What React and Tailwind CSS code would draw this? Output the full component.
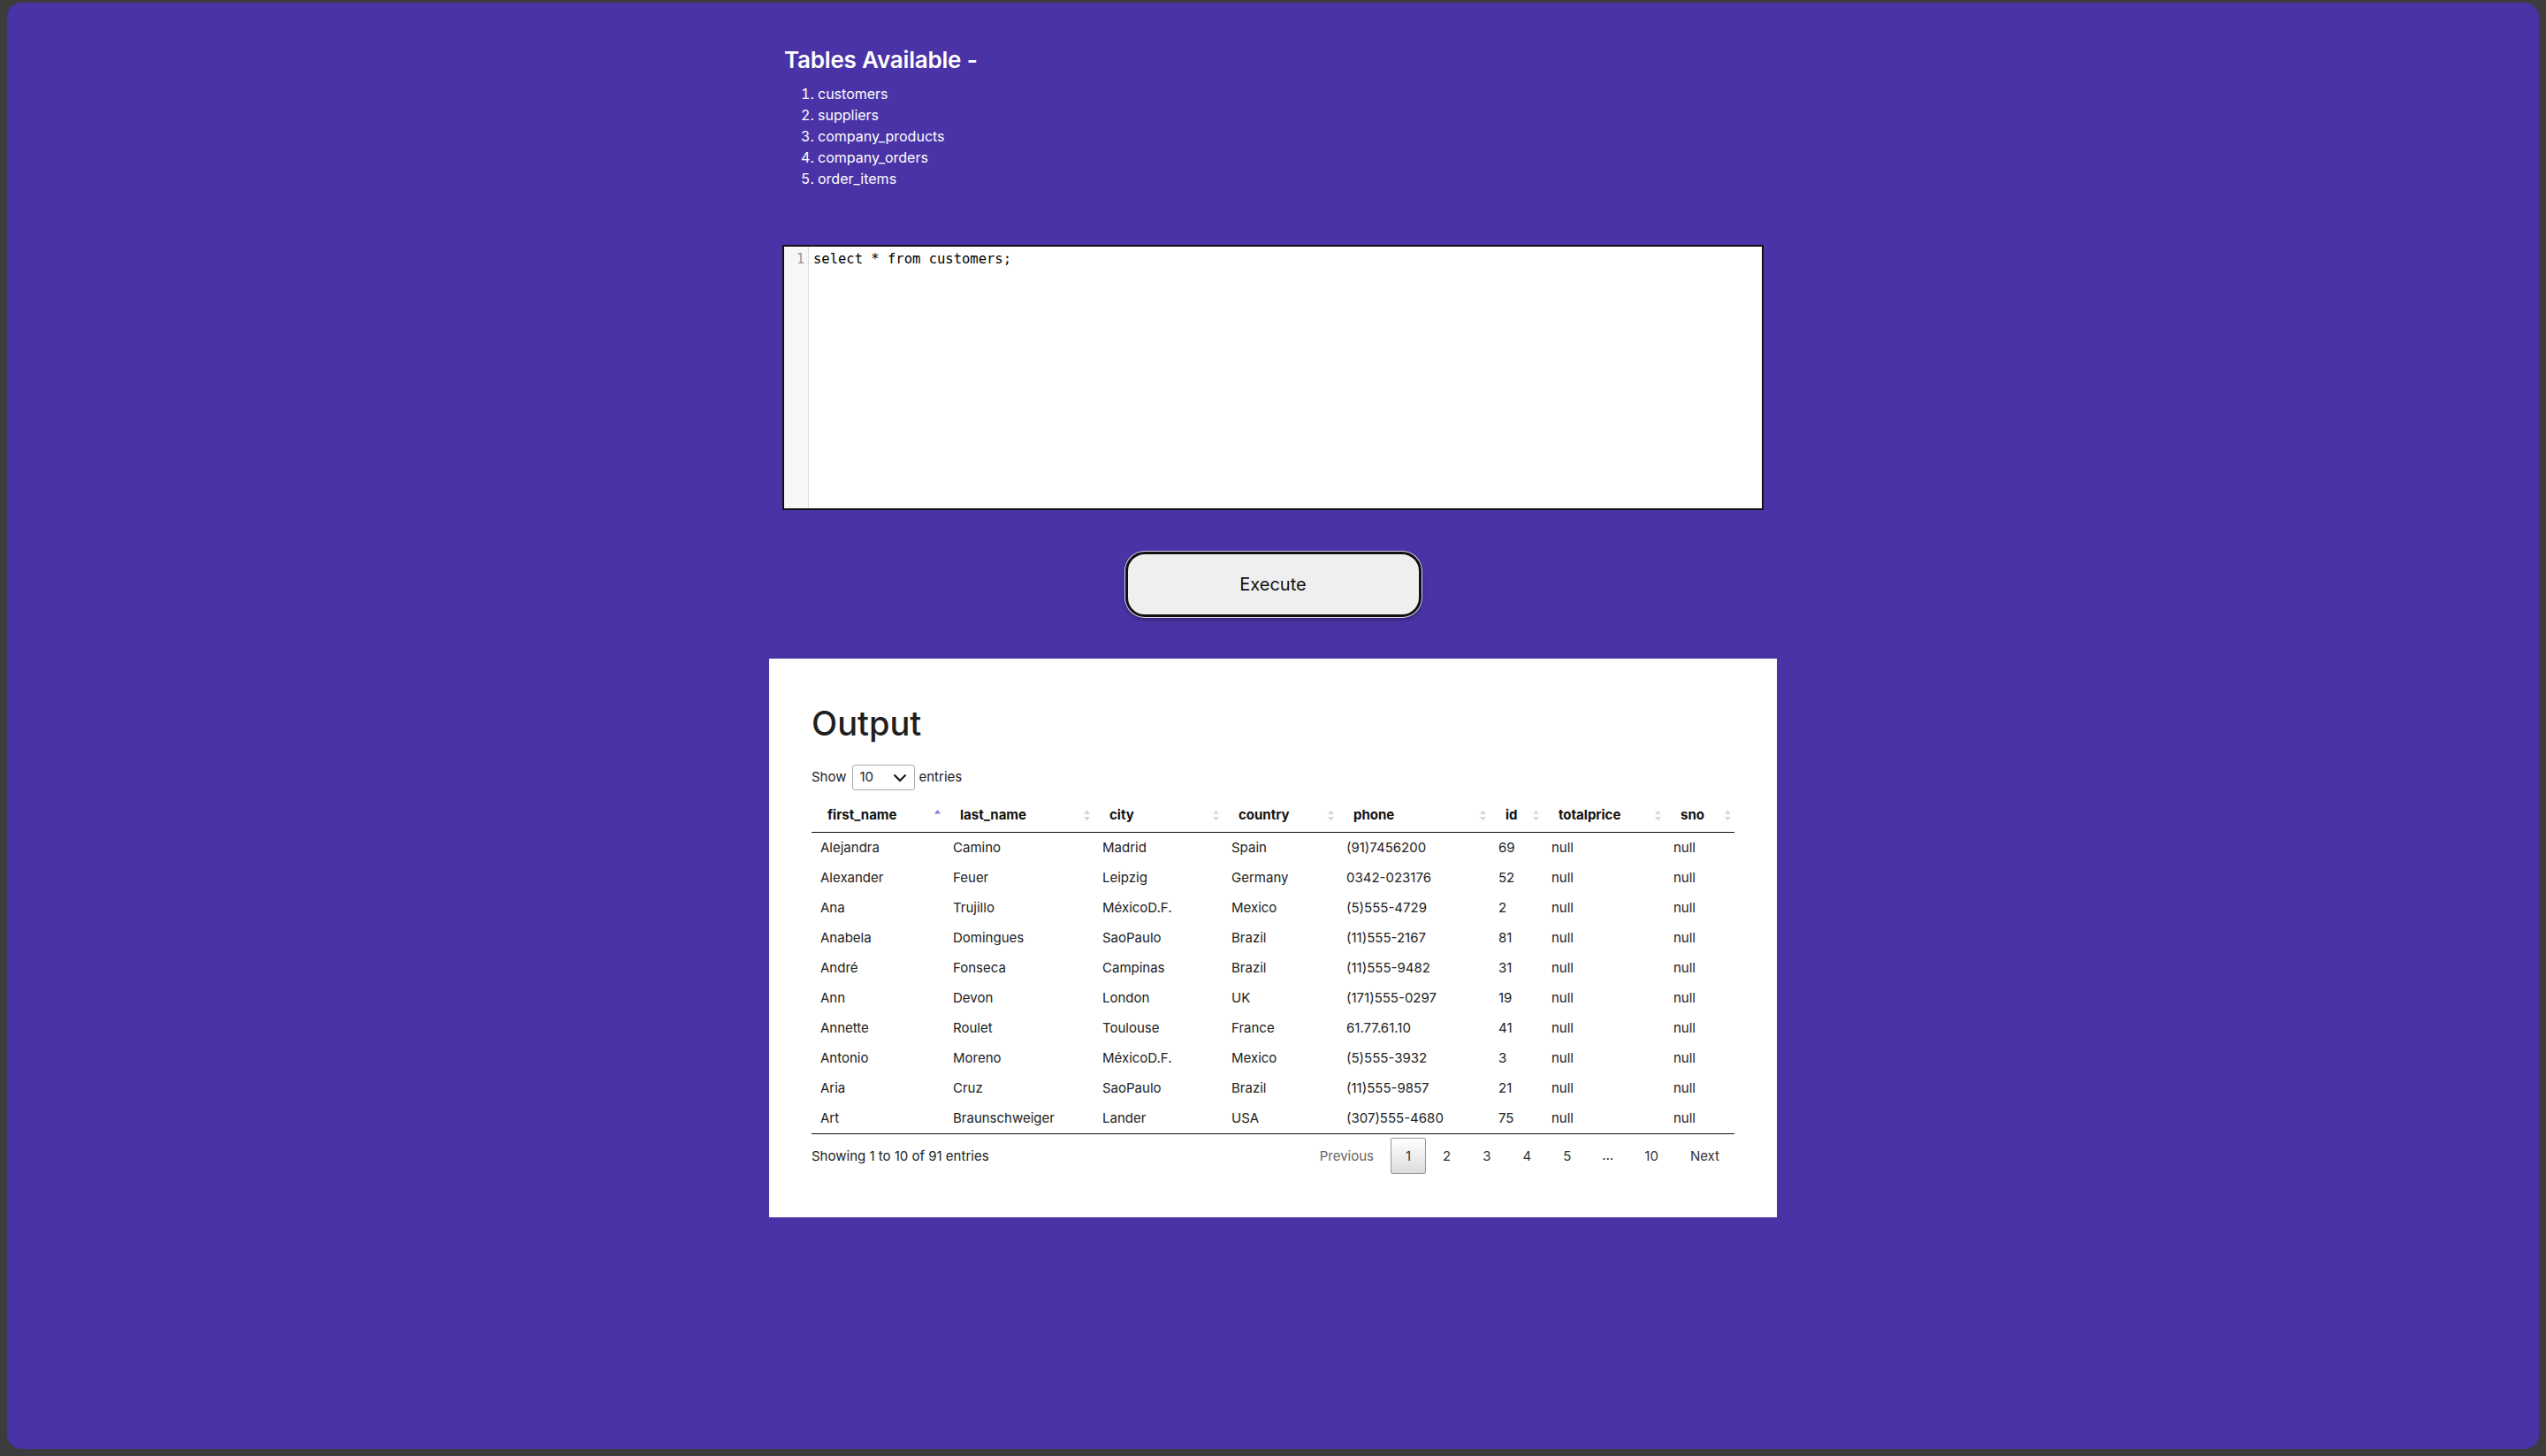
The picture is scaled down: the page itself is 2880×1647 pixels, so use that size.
import React from "react";

const rows = [
  ["Alejandra", "Camino", "Madrid", "Spain", "(91)7456200", "69", "null", "null"],
  ["Alexander", "Feuer", "Leipzig", "Germany", "0342-023176", "52", "null", "null"],
  ["Ana", "Trujillo", "MéxicoD.F.", "Mexico", "(5)555-4729", "2", "null", "null"],
  ["Anabela", "Domingues", "SaoPaulo", "Brazil", "(11)555-2167", "81", "null", "null"],
  ["André", "Fonseca", "Campinas", "Brazil", "(11)555-9482", "31", "null", "null"],
  ["Ann", "Devon", "London", "UK", "(171)555-0297", "19", "null", "null"],
  ["Annette", "Roulet", "Toulouse", "France", "61.77.61.10", "41", "null", "null"],
  ["Antonio", "Moreno", "MéxicoD.F.", "Mexico", "(5)555-3932", "3", "null", "null"],
  ["Aria", "Cruz", "SaoPaulo", "Brazil", "(11)555-9857", "21", "null", "null"],
  ["Art", "Braunschweiger", "Lander", "USA", "(307)555-4680", "75", "null", "null"],
];

const cols = [
  { name: "first_name", w: "w-[150px]", sort: "asc" },
  { name: "last_name", w: "w-[169px]", sort: "both" },
  { name: "city", w: "w-[146px]", sort: "both" },
  { name: "country", w: "w-[130px]", sort: "both" },
  { name: "phone", w: "w-[172px]", sort: "both" },
  { name: "id", w: "w-[60px]", sort: "both" },
  { name: "totalprice", w: "w-[138px]", sort: "both" },
  { name: "sno", w: "w-[79px]", sort: "both" },
];

function SortIcon({ kind }) {
  if (kind === "asc") {
    return (
      <svg width="9" height="15" viewBox="0 0 9 15" className="shrink-0">
        <polygon points="1,5.5 4.5,1 8,5.5" fill="#7d7ddc" />
      </svg>
    );
  }
  return (
    <svg width="9" height="15" viewBox="0 0 9 15" className="shrink-0">
      <polygon points="1,6 4.5,1.5 8,6" fill="#d6d6d6" />
      <polygon points="1,9 4.5,13.5 8,9" fill="#d6d6d6" />
    </svg>
  );
}

export default function App() {
  return (
    <div className="w-full h-[1647px] bg-[#3c3c3c] pt-[3px] px-[8px] pb-[8px] [font-family:Inter,'Noto_Sans',sans-serif]">
      <div className="h-full rounded-[16px] bg-[#4a33a6] flex flex-col items-center">
        <div className="w-[1110px] pt-[48px] text-white">
          <h1 className="text-[26px] leading-[34px] font-semibold tracking-[-0.2px] pl-[2px]">Tables Available -</h1>
          <ol className="list-decimal pl-[40px] mt-[9px] text-[16px] leading-[24px]">
            <li>customers</li>
            <li>suppliers</li>
            <li>company_products</li>
            <li>company_orders</li>
            <li>order_items</li>
          </ol>
        </div>

        <div className="mt-[63px] w-[1110px] h-[300px] bg-white border-[2px] border-[#111] flex">
          <div className="w-[28px] bg-[#f7f7f7] border-r border-[#ddd] pt-[4px] pr-[4px] text-right text-[#999] text-[15.5px] leading-[20px] [font-family:'DejaVu_Sans_Mono',monospace]">
            1
          </div>
          <div className="pl-[5px] pt-[4px] text-[15.5px] leading-[20px] text-black [font-family:'DejaVu_Sans_Mono',monospace]">
            select * from customers;
          </div>
        </div>

        <button className="mt-[47px] w-[335px] h-[74px] rounded-[22px] bg-[#efefef] border-[3px] border-[#111] ring-1 ring-white/80 shadow-[0_3px_5px_rgba(0,0,0,0.35)] text-[20px] text-[#111]">
          Execute
        </button>

        <div className="mt-[47px] w-[1140px] bg-white px-[48px] pt-[50px] pb-[49px] text-[#222]">
          <h2 className="text-[38px] leading-[46px] font-medium text-[#1f1f1f]">Output</h2>
          <div className="mt-[24px] flex items-center h-[29px] text-[15px] text-[#222]">
            <span>Show</span>
            <div className="ml-[6px] mr-[5px] w-[71px] h-[29px] border border-[#aaa] rounded-[3px] flex items-center justify-between pl-[8px] pr-[8px]">
              <span>10</span>
              <svg width="16" height="10" viewBox="0 0 16 10">
                <path d="M1.5 1.5 L8 8 L14.5 1.5" fill="none" stroke="#111" strokeWidth="2" />
              </svg>
            </div>
            <span>entries</span>
          </div>

          <table className="mt-[9px] w-[1044px] table-fixed border-collapse text-[15px]">
            <colgroup>
              {cols.map((c) => (
                <col key={c.name} className={c.w} />
              ))}
            </colgroup>
            <thead>
              <tr className="border-b border-[#111]">
                {cols.map((c) => (
                  <th key={c.name} className="p-0 text-left font-bold text-[#111]">
                    <div className="flex items-center justify-between pl-[18px] pr-[3px] h-[38px] leading-[18px]">
                      <span>{c.name}</span>
                      <SortIcon kind={c.sort} />
                    </div>
                  </th>
                ))}
              </tr>
            </thead>
            <tbody>
              {rows.map((r, i) => (
                <tr key={i} className={i === rows.length - 1 ? "border-b border-[#111]" : ""}>
                  {r.map((v, j) => (
                    <td key={j} className="px-[10px] py-[8px] leading-[18px] whitespace-nowrap text-[#222]">
                      {v}
                    </td>
                  ))}
                </tr>
              ))}
            </tbody>
          </table>

          <div className="flex items-start justify-between text-[15px]">
            <div className="pt-[16px] leading-[18px] text-[#222]">Showing 1 to 10 of 91 entries</div>
            <div className="pt-[4px] flex items-center">
              <span className="px-[16px] h-[41px] leading-[39px] border border-transparent text-[#666]">Previous</span>
              <span className="ml-[2px] px-[16px] h-[41px] leading-[39px] border border-[#979797] rounded-[2px] bg-gradient-to-b from-white to-[#dcdcdc] text-[#333]">1</span>
              <span className="ml-[2px] px-[16px] h-[41px] leading-[39px] border border-transparent text-[#333]">2</span>
              <span className="ml-[2px] px-[16px] h-[41px] leading-[39px] border border-transparent text-[#333]">3</span>
              <span className="ml-[2px] px-[16px] h-[41px] leading-[39px] border border-transparent text-[#333]">4</span>
              <span className="ml-[2px] px-[16px] h-[41px] leading-[39px] border border-transparent text-[#333]">5</span>
              <span className="ml-[2px] px-[16px] h-[41px] leading-[39px] text-[#333]">…</span>
              <span className="ml-[2px] px-[16px] h-[41px] leading-[39px] border border-transparent text-[#333]">10</span>
              <span className="ml-[2px] px-[16px] h-[41px] leading-[39px] border border-transparent text-[#333]">Next</span>
            </div>
          </div>
        </div>
      </div>
    </div>
  );
}
